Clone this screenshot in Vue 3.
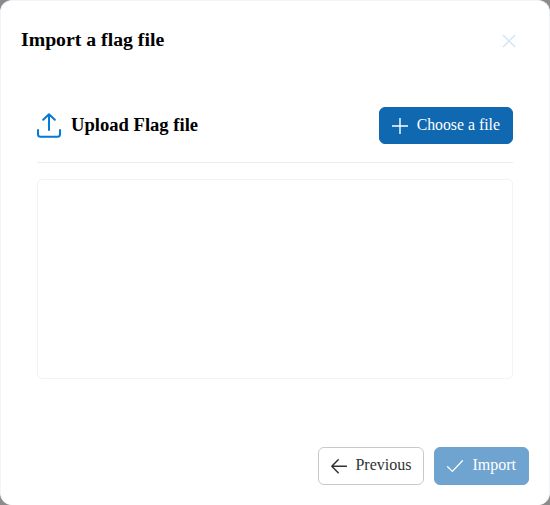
<script setup>
const title = 'Import a flag file'
const sectionTitle = 'Upload Flag file'
</script>

<template>
  <div class="dialog" role="dialog" aria-label="Import a flag file">
    <header class="header">
      <h2 class="title">{{ title }}</h2>
      <button class="close" aria-label="Close">
        <svg width="14" height="14" viewBox="0 0 14 14" fill="none" stroke="currentColor" stroke-width="1.5">
          <path d="M1 1L13 13M13 1L1 13" />
        </svg>
      </button>
    </header>

    <main class="content">
      <div class="toolbar">
        <div class="label">
          <svg class="upload" width="24" height="25" viewBox="0 0 24 25" fill="none" stroke="currentColor" stroke-width="2" stroke-linecap="round" stroke-linejoin="round">
            <path d="M12 17V1.2M6.2 6.8L12 1.2L17.8 6.8M1 17V21.2Q1 23.8 3.6 23.8H20.4Q23 23.8 23 21.2V17" />
          </svg>
          <h3 class="subtitle">{{ sectionTitle }}</h3>
        </div>
        <button class="btn primary choose">
          <svg width="16" height="16" viewBox="0 0 16 16" fill="none" stroke="currentColor" stroke-width="1.4">
            <path d="M8 0V16M0 8H16" />
          </svg>
          <span>Choose a file</span>
        </button>
      </div>
      <div class="dropzone"></div>
    </main>

    <footer class="footer">
      <button class="btn outlined">
        <svg width="16" height="16" viewBox="0 0 16 16" fill="none" stroke="currentColor" stroke-width="1.5" stroke-linecap="round" stroke-linejoin="round">
          <path d="M15.4 8.2H0.8M7.2 1.7L0.8 8.2L7.2 14.7" />
        </svg>
        <span>Previous</span>
      </button>
      <button class="btn primary import" disabled>
        <svg width="16" height="16" viewBox="0 0 16 16" fill="none" stroke="currentColor" stroke-width="1.3" stroke-linecap="round" stroke-linejoin="round">
          <path d="M0.6 8.8L5.4 13.4L15.4 2.8" />
        </svg>
        <span>Import</span>
      </button>
    </footer>
  </div>
</template>

<style>
body {
  background: #8b8b8b;
  overflow: hidden;
}
</style>

<style scoped>
.dialog {
  box-sizing: border-box;
  width: 550px;
  height: 505px;
  display: flex;
  flex-direction: column;
  background: #fff;
  border: 1px solid #eff5fa;
  border-bottom-color: #fff;
  border-radius: 12px;
  font-family: "Liberation Serif", "Times New Roman", serif;
  color: #000;
}
.header {
  display: flex;
  align-items: center;
  justify-content: space-between;
  height: 78px;
  padding: 0 33px 0 20px;
}
.title {
  margin: 0;
  padding-bottom: 2px;
  font-size: 19.75px;
  line-height: 24px;
  font-weight: 700;
}
.close {
  display: flex;
  padding: 2px 0 0;
  border: 0;
  background: none;
  color: #d5e4f1;
}
.content {
  flex: 1;
  padding: 0 36px;
}
.toolbar {
  box-sizing: border-box;
  height: 84px;
  padding: 28px 0 18px;
  display: flex;
  align-items: flex-start;
  justify-content: space-between;
  border-bottom: 1px solid #ebecee;
}
.label {
  height: 37px;
  display: flex;
  align-items: center;
  gap: 10px;
}
.upload {
  color: #0379d8;
}
.subtitle {
  margin: 0;
  padding-bottom: 2px;
  font-size: 18.6px;
  line-height: 22px;
  font-weight: 700;
}
.dropzone {
  box-sizing: border-box;
  height: 200px;
  margin-top: 16px;
  border: 1px solid #eff4f8;
  border-radius: 5px;
}
.footer {
  display: flex;
  justify-content: flex-end;
  gap: 10px;
  padding: 0 20px 19px;
}
.btn {
  box-sizing: border-box;
  height: 38px;
  display: flex;
  align-items: center;
  gap: 8px;
  padding: 0 12px;
  border: 1px solid transparent;
  border-radius: 6px;
  font-family: inherit;
  font-size: 16px;
  line-height: 18px;
}
.btn span {
  margin-top: -2px;
}
.choose {
  height: 37px;
  gap: 9px;
  font-size: 15.8px;
}
.import {
  gap: 9px;
}
.primary {
  background: #1068b1;
  border-color: #1068b1;
  color: #fff;
}
.primary:disabled {
  opacity: 0.6;
}
.outlined {
  background: #fff;
  border-color: #c9c9c9;
  color: #303234;
}
</style>
